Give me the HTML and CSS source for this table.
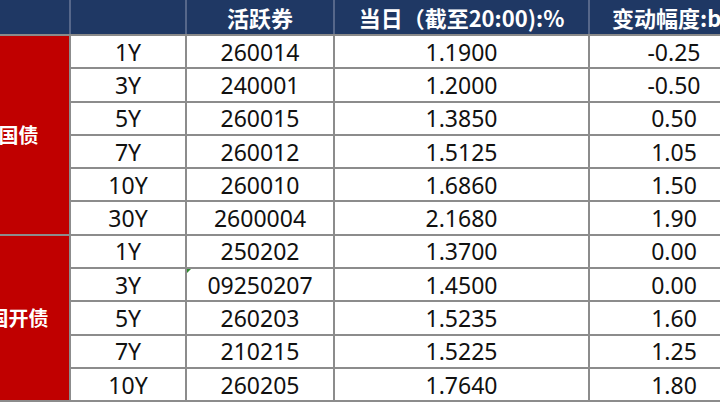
FILE: index.html
```html
<!DOCTYPE html>
<html lang="zh">
<head>
<meta charset="utf-8">
<link rel="stylesheet" href="styles.css">
</head>
<body>
<table class="grid">
  <colgroup>
    <col class="c1"><col class="c2"><col class="c3"><col class="c4"><col class="c5">
  </colgroup>
  <thead>
    <tr class="head">
      <th></th><th></th><th>活跃券</th><th>当日（截至20:00):%</th><th class="last">变动幅度:bp</th>
    </tr>
  </thead>
  <tbody>
    <tr><td class="group" rowspan="6">国债</td><td>1Y</td><td>260014</td><td>1.1900</td><td>-0.25</td></tr>
    <tr><td>3Y</td><td>240001</td><td>1.2000</td><td>-0.50</td></tr>
    <tr><td>5Y</td><td>260015</td><td>1.3850</td><td>0.50</td></tr>
    <tr><td>7Y</td><td>260012</td><td>1.5125</td><td>1.05</td></tr>
    <tr><td>10Y</td><td>260010</td><td>1.6860</td><td>1.50</td></tr>
    <tr><td>30Y</td><td>2600004</td><td>2.1680</td><td>1.90</td></tr>
    <tr><td class="group" rowspan="5">国开债</td><td>1Y</td><td>250202</td><td>1.3700</td><td>0.00</td></tr>
    <tr><td>3Y</td><td class="marked">09250207</td><td>1.4500</td><td>0.00</td></tr>
    <tr><td>5Y</td><td>260203</td><td>1.5235</td><td>1.60</td></tr>
    <tr><td>7Y</td><td>210215</td><td>1.5225</td><td>1.25</td></tr>
    <tr><td>10Y</td><td>260205</td><td>1.7640</td><td>1.80</td></tr>
  </tbody>
</table>
</body>
</html>
```
FILE: styles.css
```css
html, body {
  margin: 0;
  padding: 0;
  background: #ffffff;
  overflow: hidden;
  width: 720px;
  height: 405px;
}

.grid {
  border-collapse: collapse;
  table-layout: fixed;
  margin-left: -34px;
  width: 792px;
  font-family: "Noto Sans", "Noto Sans CJK SC", sans-serif;
  color: #111111;
}

.c1 { width: 103px; }
.c2 { width: 116px; }
.c3 { width: 148px; }
.c4 { width: 255px; }
.c5 { width: 170px; }

.head th {
  background: #1f3864;
  color: #ffffff;
  font-family: "Noto Sans CJK SC", sans-serif;
  font-weight: 700;
  font-size: 22px;
  height: 34px;
  padding: 0;
  text-align: center;
  white-space: nowrap;
  overflow: hidden;
  border-left: 2px solid #56678a;
  border-right: 2px solid #56678a;
  border-bottom: 2px solid #8a8a8a;
  line-height: 34px;
}

.head th.last {
  text-align: left;
  padding-left: 22px;
}

td {
  height: 31.3px;
  padding: 0;
  text-align: center;
  font-size: 23px;
  line-height: 30px;
  border: 2px solid #8c8c8c;
  white-space: nowrap;
}

td.group {
  background: #c00000;
  color: #ffffff;
  font-family: "Noto Sans CJK SC", sans-serif;
  font-weight: 700;
  font-size: 20px;
}

td.marked {
  position: relative;
}

td.marked::before {
  content: "";
  position: absolute;
  left: 0;
  top: 0;
  width: 0;
  height: 0;
  border-top: 4px solid #2e8b2e;
  border-right: 4px solid transparent;
}
```
